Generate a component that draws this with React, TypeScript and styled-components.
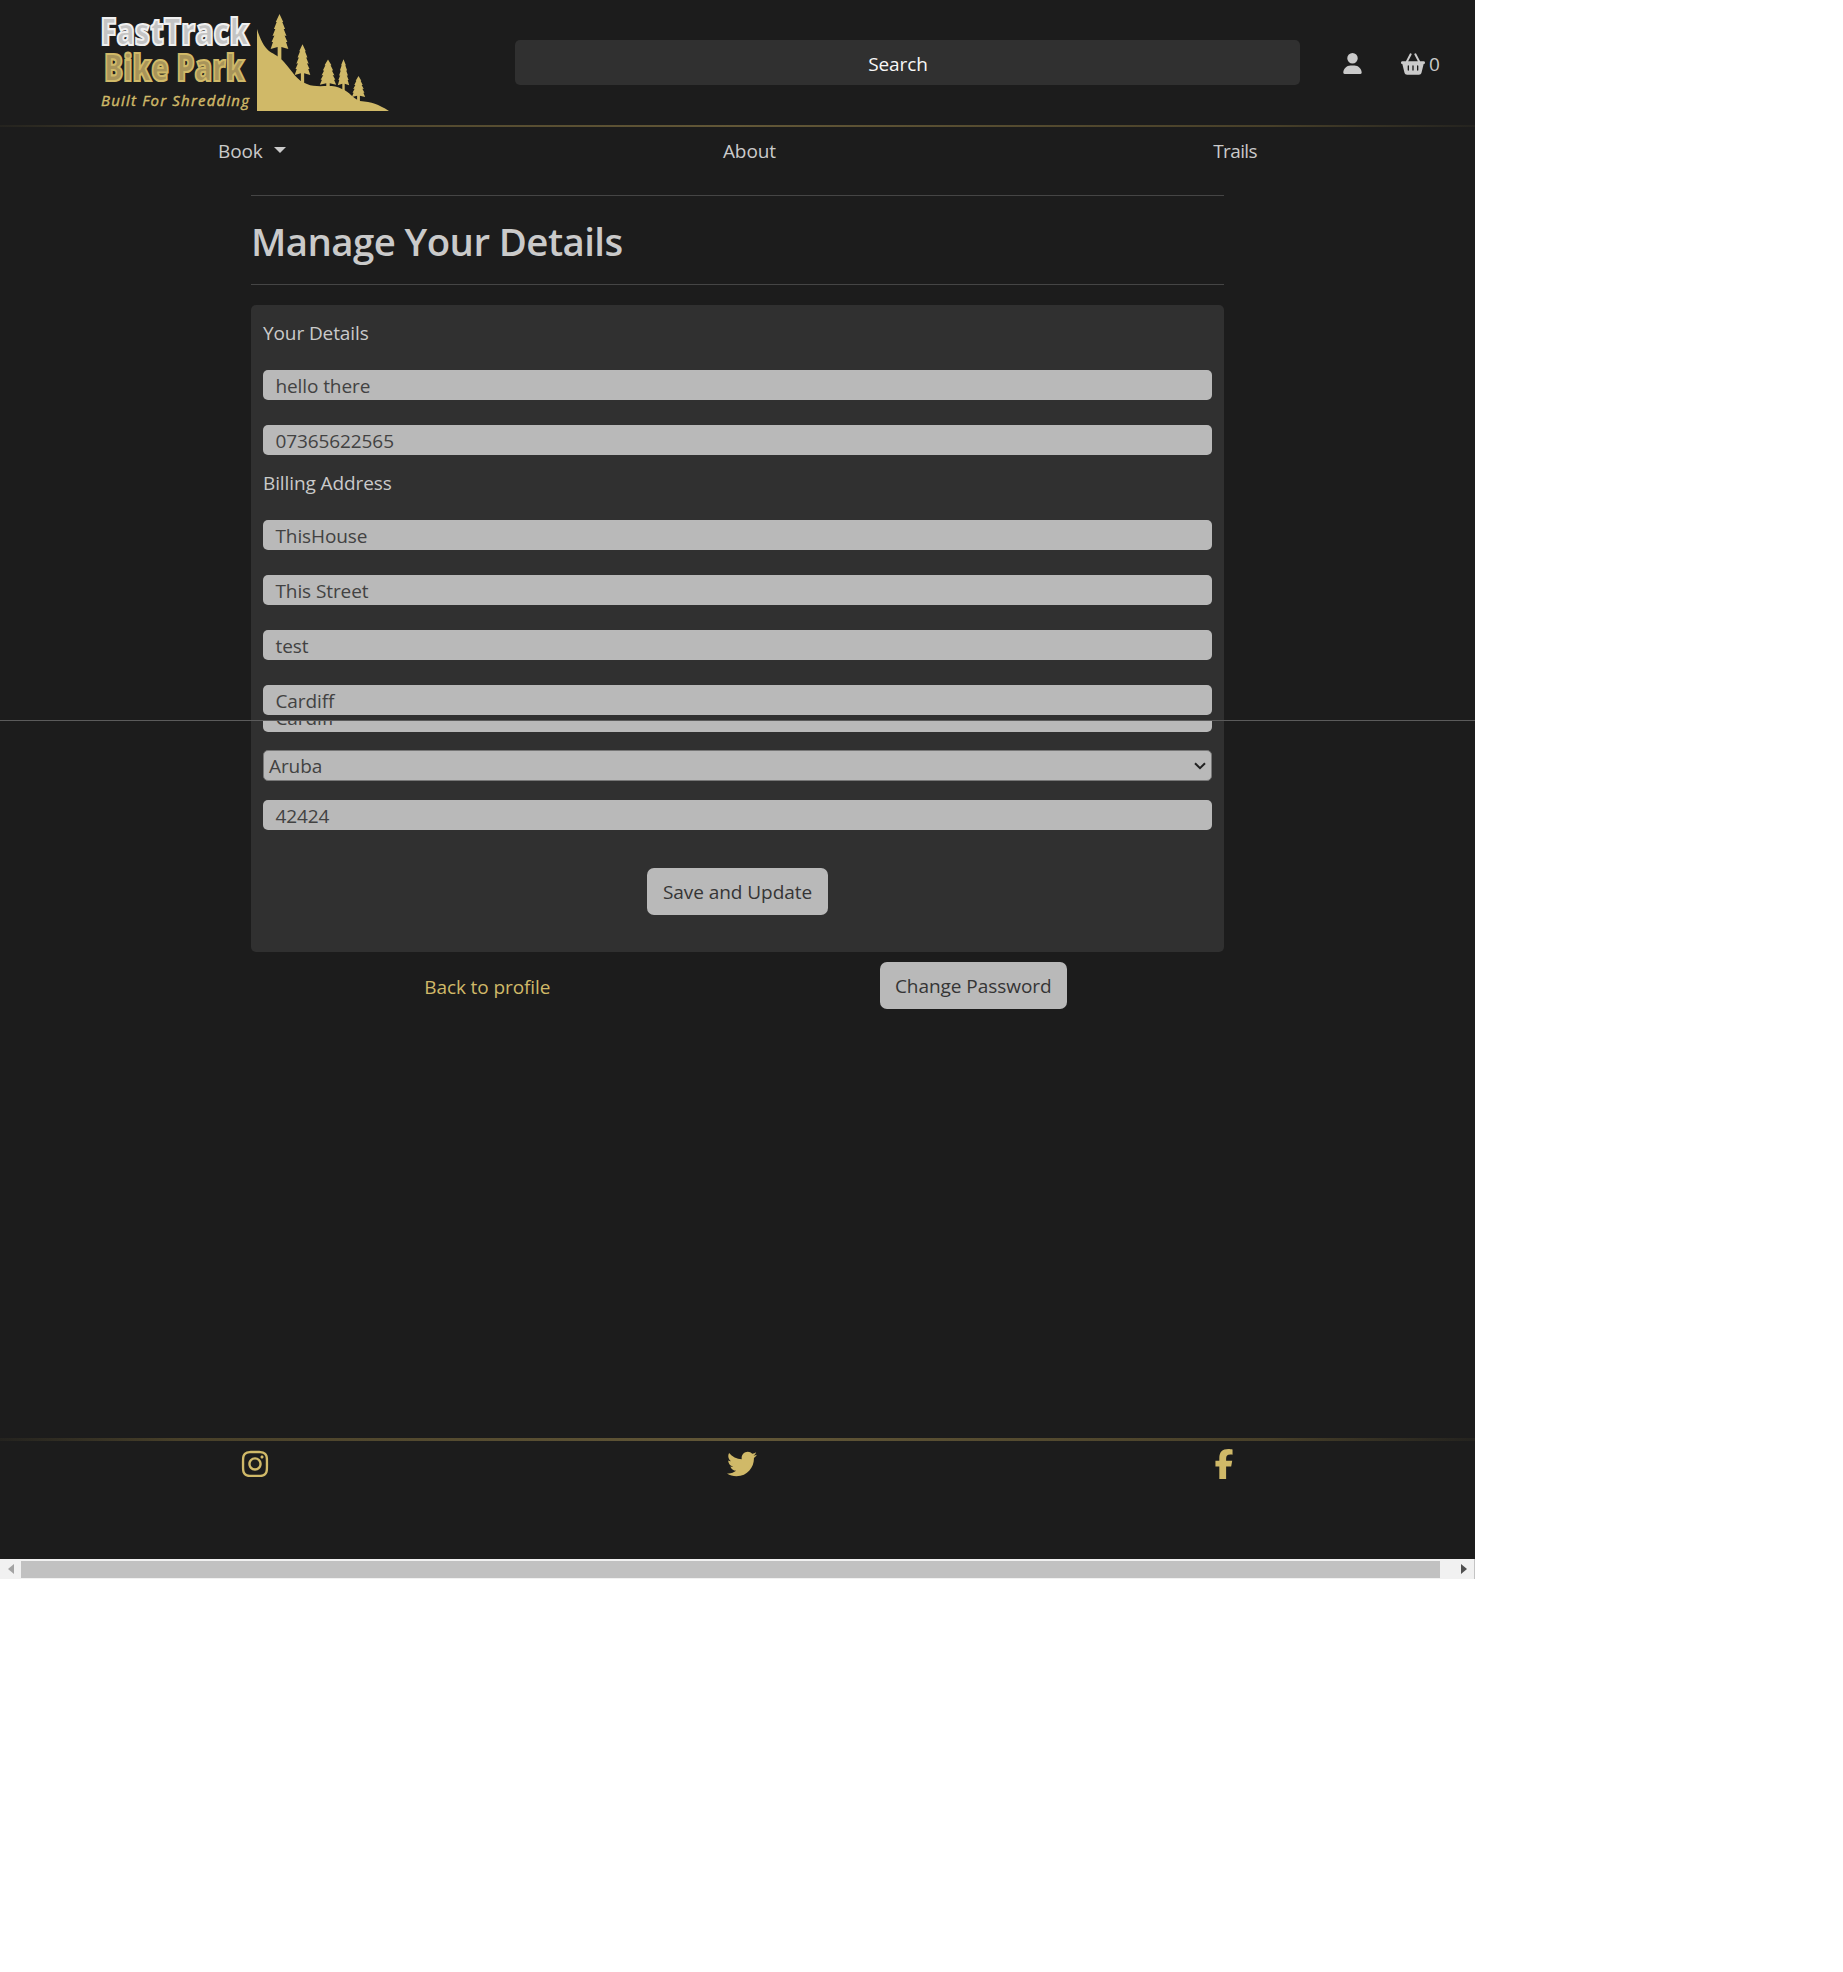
import React from "react";
import styled, { createGlobalStyle } from "styled-components";
import { FaUser, FaBasketShopping, FaInstagram, FaTwitter, FaFacebookF } from "react-icons/fa6";

const Global = createGlobalStyle`
  *, *::before, *::after { box-sizing: border-box; }
  body { margin: 0; background: #fff; }
`;

const gold = "#d0b968";
const font = `"Open Sans", "Noto Sans", sans-serif`;

const Page = styled.div`
  width: 1475px;
  font: 400 19px/30px ${font};
  letter-spacing: -0.1px;
  color: #cacaca;
  background: #1c1c1c;
`;

const Header = styled.header`
  display: flex;
  align-items: flex-start;
  height: 125px;
  padding-left: 99px;
`;

const Logo = styled.svg`
  display: block;
  width: 292px;
  height: 113px;
  flex: none;
  letter-spacing: 0;
`;

const SearchBar = styled.div`
  width: 785px;
  height: 45px;
  margin: 40px 0 0 124px;
  border-radius: 5px;
  background: #303030;
  color: #f8f8f8;
  text-align: center;
  line-height: 48px;
  padding-right: 19px;
`;

const HeaderLinks = styled.div`
  display: flex;
  align-items: center;
  height: 45px;
  margin: 41px 0 0 42px;
  svg { display: block; }
`;

const Basket = styled.span`
  display: flex;
  align-items: center;
  gap: 4px;
  margin-left: 38px;
`;

const GoldRule = styled.div<{ $size: number }>`
  height: ${(p) => p.$size}px;
  background: linear-gradient(90deg, #24231f, #484029 12%, #625737 50%, #484029 86%, #24231f);
`;

const Nav = styled.nav`
  display: flex;
  justify-content: space-between;
  height: 68px;
  padding: 9px 218px 0 218px;
`;

const NavItem = styled.a<{ $caret?: boolean }>`
  display: flex;
  align-items: center;
  gap: 11px;
  height: 30px;
  &:last-child { letter-spacing: -0.6px; }
  &::after {
    content: ${(p) => (p.$caret ? '""' : "none")};
    border: 6px solid transparent;
    border-top-color: currentColor;
    border-bottom: 0;
    margin-top: -2px;
  }
`;

const Main = styled.main`
  width: 973px;
  margin-left: 251px;
`;

const Title = styled.h1`
  height: 90px;
  margin: 0 0 20px;
  border: solid #454545;
  border-width: 1px 0;
  font-size: 38.4px;
  font-weight: 600;
  line-height: 91px;
  letter-spacing: -0.58px;
`;

const Card = styled.div`
  display: flex;
  flex-direction: column;
  height: 647px;
  padding: 13px 12px 0;
  border-radius: 5px;
  background: #303030;
`;

const Legend = styled.div<{ $gap?: number }>`
  height: 30px;
  margin: ${(p) => p.$gap || 0}px 0 22px;
`;

const Field = styled.div<{ $gap?: number }>`
  flex: none;
  height: 30px;
  margin-bottom: ${(p) => p.$gap ?? 25}px;
  padding-left: 12.5px;
  border-radius: 5px;
  background: #b9b9b9;
  color: #424242;
  line-height: 33px;
`;

const Seam = styled.div`
  height: 1px;
  width: 1475px;
  margin-left: -263px;
  background: #5b5b5b;
`;

const CutField = styled.div`
  height: 11px;
  margin-bottom: 18px;
  overflow: hidden;
  display: flex;
  flex-direction: column;
  justify-content: flex-end;
  ${Field} { margin: 0; }
`;

const Select = styled(Field)`
  display: flex;
  justify-content: space-between;
  align-items: center;
  height: 31px;
  padding: 1px 5px 0 5px;
  border: 1px solid #777;
`;

const Button = styled.button`
  height: 47px;
  padding: 0;
  border: 0;
  border-radius: 7px;
  background: #b9b9b9;
  color: #353535;
  font: 400 19px/49px ${font};
  letter-spacing: -0.05px;
`;

const SaveButton = styled(Button)`
  width: 181px;
  align-self: center;
`;

const Actions = styled.div`
  display: grid;
  grid-template-columns: 1fr 1fr;
  justify-items: center;
  height: 486px;
  padding-top: 10px;
`;

const BackLink = styled.a`
  height: 47px;
  padding-right: 14px;
  line-height: 50px;
  color: ${gold};
`;

const PasswordButton = styled(Button)`
  width: 187px;
  margin-right: 15px;
`;

const Footer = styled.footer`
  display: flex;
  justify-content: space-between;
  height: 118px;
  padding: 8px 236px 0 240px;
  color: ${gold};
  svg { display: block; }
  svg:nth-child(2) { margin-left: 4px; }
`;

const ScrollTrack = styled.div`
  display: flex;
  align-items: center;
  width: 1475px;
  height: 20px;
  border-right: 1px solid #c4c4c4;
  background: #f1f1f1;
`;

const ScrollArrow = styled.span<{ $dir: "left" | "right" }>`
  display: flex;
  justify-content: center;
  width: 21px;
  &::after {
    content: "";
    border: 5px solid transparent;
    border-left: ${(p) => (p.$dir === "right" ? "6px solid #505050" : "0")};
    border-right: ${(p) => (p.$dir === "left" ? "6px solid #a3a3a3" : "0")};
  }
`;

const ScrollThumb = styled.span`
  width: 1419px;
  height: 17px;
  margin-right: 13px;
  background: #c1c1c1;
`;

const TREE =
  "M0-36 L4-28 3-28 6-21 4.5-21 7.5-14 5.5-14.5 8.5-8 7-8 9.5-1 2-3 2 9-2 9-2-3-9.5-1-7-8-8.5-8-5.5-14.5-7.5-14-4.5-21-6-21-3-28-4-28Z";

const trees = [
  { x: 279.5, y: 50, sx: 0.93, sy: 1 },
  { x: 302.5, y: 76, sx: 0.82, sy: 0.88 },
  { x: 328, y: 85.5, sx: 0.86, sy: 0.72 },
  { x: 343.5, y: 86, sx: 0.6, sy: 0.74 },
  { x: 358.5, y: 97.5, sx: 0.7, sy: 0.6 },
];

const BrandLogo = () => (
  <Logo viewBox="99 0 292 113">
    <g fontFamily={font} fontWeight={800} strokeLinejoin="miter" fontSize={36.5}>
      <text x={100.5} y={45.3} textLength={148.5} lengthAdjust="spacingAndGlyphs" fill="#c4c4c4" stroke="#f0f0f0" strokeWidth={2.2}>
        FastTrack
      </text>
      <text x={104} y={81} textLength={140.5} lengthAdjust="spacingAndGlyphs" fill="#a8945a" stroke={gold} strokeWidth={2.2}>
        Bike Park
      </text>
    </g>
    <text
      x={101} y={105.5} textLength={148} fill={gold} stroke={gold} strokeWidth={0.4}
      fontFamily={font} fontStyle="italic" fontWeight={400} fontSize={15}
    >
      Built For Shredding
    </text>
    <path
      fill={gold}
      d="M257 29C260 39 264 47 269 51C275 55 279 56 284 62C293 72 297 81 307 84C318 89 332 83 342 89C350 92 352 98 360 101C372 102 378 104 389 111H257Z"
    />
    {trees.map((t) => (
      <path key={t.x} d={TREE} fill={gold} transform={`translate(${t.x} ${t.y}) scale(${t.sx} ${t.sy})`} />
    ))}
  </Logo>
);

export default function App() {
  return (
    <>
      <Global />
      <Page>
        <Header>
          <BrandLogo />
          <SearchBar>Search</SearchBar>
          <HeaderLinks>
            <FaUser size={21} />
            <Basket>
              <FaBasketShopping size={24} />0
            </Basket>
          </HeaderLinks>
        </Header>
        <GoldRule $size={2} />
        <Nav>
          <NavItem $caret>Book</NavItem>
          <NavItem>About</NavItem>
          <NavItem>Trails</NavItem>
        </Nav>
        <Main>
          <Title>Manage Your Details</Title>
          <Card>
            <Legend>Your Details</Legend>
            <Field>hello there</Field>
            <Field $gap={0}>07365622565</Field>
            <Legend $gap={13}>Billing Address</Legend>
            <Field>ThisHouse</Field>
            <Field>This Street</Field>
            <Field>test</Field>
            <Field $gap={5}>Cardiff</Field>
            <Seam />
            <CutField>
              <Field>Cardiff</Field>
            </CutField>
            <Select $gap={19}>
              Aruba
              <svg width="12" height="8" viewBox="0 0 12 8" fill="none" stroke="#222" strokeWidth="2">
                <path d="M1 1.2 6 6.2 11 1.2" />
              </svg>
            </Select>
            <Field $gap={38}>42424</Field>
            <SaveButton>Save and Update</SaveButton>
          </Card>
          <Actions>
            <BackLink>Back to profile</BackLink>
            <PasswordButton>Change Password</PasswordButton>
          </Actions>
        </Main>
        <GoldRule $size={3} />
        <Footer>
          <FaInstagram size={30} />
          <FaTwitter size={30} />
          <FaFacebookF size={30} />
        </Footer>
        <ScrollTrack>
          <ScrollArrow $dir="left" />
          <ScrollThumb />
          <ScrollArrow $dir="right" />
        </ScrollTrack>
      </Page>
    </>
  );
}
